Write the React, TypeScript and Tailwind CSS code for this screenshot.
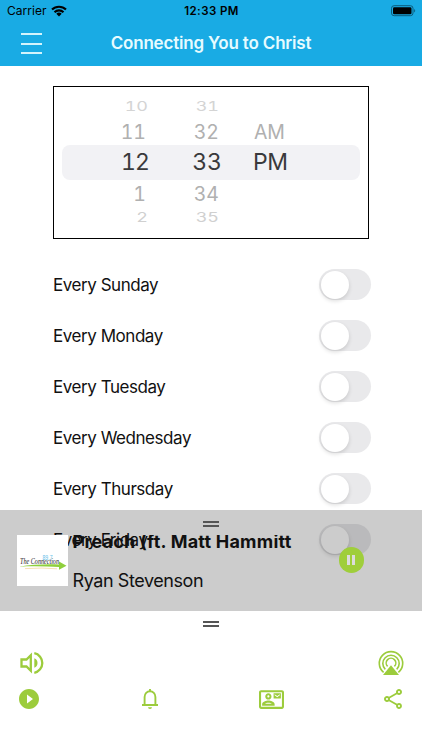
import { MdOutlineContactMail, MdOutlineShare, MdPlayCircleFilled } from "react-icons/md";

const days = ["Sunday", "Monday", "Tuesday", "Wednesday", "Thursday", "Friday"];

function StatusBar() {
  return (
    <div className="flex h-[22px] items-center justify-between pr-1.5 pl-[7px] text-black">
      <div className="flex w-24 items-center gap-1 text-[12px] tracking-[0.05px]">
        Carrier
        <svg width="16" height="12" viewBox="0 0 16 12">
          <path
            d="M1 4.6a10 10 0 0 1 14 0M3.5 7.2a6.4 6.4 0 0 1 9 0"
            fill="none"
            stroke="#000"
            strokeWidth="2.1"
          />
          <path d="M8 11.5 5.3 8.8a3.9 3.9 0 0 1 5.4 0z" />
        </svg>
      </div>
      <span className="pt-0.5 text-[11.5px] font-semibold tracking-[0.4px]">12:33 PM</span>
      <div className="flex w-24 justify-end">
        <svg width="25" height="12" viewBox="0 0 25 12">
          <rect x="0.5" y="0.7" width="21.5" height="10" rx="2.6" fill="none" stroke="#0b5c7c" />
          <rect x="2" y="2.2" width="18.5" height="7" rx="1.3" />
          <path d="M23.2 4v3.6c1.3-.6 1.3-3 0-3.6z" fill="#0b5c7c" />
        </svg>
      </div>
    </div>
  );
}

function Header() {
  return (
    <header className="h-[66px] bg-[#19abe4]">
      <StatusBar />
      <div className="flex h-[43px] items-center justify-between px-[21px]">
        <button className="flex h-[21px] w-[21px] flex-col justify-between">
          <span className="h-0.5 w-full bg-[#d3f4fc]" />
          <span className="h-0.5 w-full bg-[#d3f4fc]" />
          <span className="h-0.5 w-full bg-[#d3f4fc]" />
        </button>
        <h1 className="text-[17px] font-semibold tracking-[-0.18px] text-[#e6fbff]">
          Connecting You to Christ
        </h1>
        <span className="w-[21px]" />
      </div>
    </header>
  );
}

function TimePicker() {
  return (
    <div className="mt-5 ml-[53px] flex h-[153px] w-[316px] flex-col items-center border border-black pt-[11px] text-[19.5px] text-[#b0b0b0] tabular-nums">
      <div className="grid h-[18px] w-[298px] grid-cols-[86px_71px_141px] items-center text-right text-[18px] leading-[14px] text-[#d4d4d4]">
        <span className="scale-y-[.72]">10</span>
        <span className="scale-y-[.72]">31</span>
      </div>
      <div className="grid h-[29px] w-[298px] grid-cols-[84px_73px_141px] items-center pt-[2px] text-right leading-[26px]">
        <span>11</span>
        <span>32</span>
        <span className="pl-[35px] text-left tracking-[-0.2px]">AM</span>
      </div>
      <div className="grid h-[35px] w-[298px] shrink-0 grid-cols-[87px_73px_138px] items-center rounded-lg bg-[#f2f2f5] text-right text-[23px] text-[#3a3a3c]">
        <span className="tracking-[-0.9px]">12</span>
        <span>33</span>
        <span className="pl-[31px] text-left tracking-[-0.5px]">PM</span>
      </div>
      <div className="grid h-[27px] w-[298px] grid-cols-[84px_73px_141px] items-center text-right">
        <span>1</span>
        <span>34</span>
      </div>
      <div className="grid h-[21px] w-[298px] grid-cols-[86px_71px_141px] items-center text-right text-[18px] leading-[14px] text-[#d0d0d0]">
        <span className="scale-y-[.72]">2</span>
        <span className="scale-y-[.72]">35</span>
      </div>
    </div>
  );
}

function DayRow({ day }: { day: string }) {
  return (
    <div className="flex h-[51px] items-center justify-between pr-[51px] pl-[53px]">
      <span className="pt-0.5 text-[17px] tracking-[-0.45px] text-[#111]">Every {day}</span>
      <button className="flex h-[31.5px] w-[52px] items-center rounded-full bg-[#e9e9eb] pl-0.5">
        <span className="size-7 rounded-full bg-white shadow-[0_2px_4px_rgba(0,0,0,0.14)]" />
      </button>
    </div>
  );
}

function Handle() {
  return (
    <div className="mx-auto flex w-4 flex-col gap-0.5">
      <span className="h-0.5 bg-[#555]" />
      <span className="h-0.5 bg-[#555]" />
    </div>
  );
}

function Logo() {
  return (
    <svg width="51" height="51" viewBox="0 0 51 51" className="shrink-0 bg-white">
      <path d="M2 31.8C14 29.4 29 29 42 29.4v-3l7.5 4.4-7.5 4V32C29 31.4 15 31 2 31.8z" fill="#8fcf3c" />
      <path d="M8 33.6q18-1.2 32 .2" fill="none" stroke="#f5d9a0" strokeWidth="0.8" />
      <text
        x="25.5"
        y="25"
        fontSize="6.5"
        fill="#62bde8"
        textLength="10"
        lengthAdjust="spacingAndGlyphs"
        fontFamily="Liberation Sans, sans-serif"
      >
        89.7
      </text>
      <text
        x="3"
        y="29.3"
        fontSize="7.5"
        fill="#222"
        fontStyle="italic"
        fontFamily="Liberation Serif, serif"
        textLength="39"
        lengthAdjust="spacingAndGlyphs"
      >
        The Connection
      </text>
    </svg>
  );
}

function NowPlaying() {
  return (
    <div className="h-[101.5px] bg-black/20 pt-[11px]">
      <Handle />
      <div className="flex pt-[8.5px] pl-[16.5px]">
        <Logo />
        <div className="ml-[5px] w-[219px] overflow-hidden whitespace-nowrap text-[#111]">
          <p className="-mt-1.5 text-[18px] leading-[26px] font-bold tracking-[0.22px]">Preach (ft. Matt Hammitt)</p>
          <p className="mt-[13px] text-[18px] leading-[26px] tracking-[-0.43px]">Ryan Stevenson</p>
        </div>
        <button className="mt-3 ml-[47px] flex size-[25.5px] items-center justify-center gap-[2px] rounded-full bg-[#9fce3b]">
          <span className="h-[10px] w-[3px] bg-[#dcdcdc]" />
          <span className="h-[10px] w-[3px] bg-[#dcdcdc]" />
        </button>
      </div>
    </div>
  );
}

function VolumeIcon() {
  return (
    <svg width="26" height="24" viewBox="0 0 26 24" fill="none" stroke="#9ccc3c" strokeWidth="2.3">
      <path d="M2.5 8.5h5l4.3-4.2v15.4l-4.3-4.2h-5z" />
      <path d="M15.3 7.2a5.2 5.2 0 0 1 0 9.6z" fill="#9ccc3c" stroke="none" />
      <path d="M15.3 2.2a10 10 0 0 1 0 19.6" />
    </svg>
  );
}

function AirPlayIcon() {
  return (
    <svg width="26" height="26" viewBox="0 0 26 26" fill="none" stroke="#9ccc3c" strokeWidth="1.6">
      <path d="M5.6 22.4a11.7 11.7 0 1 1 14.8 0" />
      <path d="M7.3 19.4a8.2 8.2 0 1 1 11.4 0" />
      <path d="M9.6 16.4a4.8 4.8 0 1 1 6.8 0" />
      <path d="M13 15.3 21 24.9H5z" fill="#9ccc3c" stroke="none" />
    </svg>
  );
}

function BellIcon() {
  return (
    <svg width="24" height="22" viewBox="-3 0 24 22" fill="none" stroke="#9ccc3c" strokeWidth="1.9">
      <path d="M3.6 16.5V9a5.4 5.8 0 0 1 10.8 0v7.5" />
      <path d="M1 17h16M9 1v3" />
      <path d="M7 19.2h4a2 1.8 0 0 1-4 0z" fill="#9ccc3c" stroke="none" />
    </svg>
  );
}

function Toolbar() {
  return (
    <div className="h-[139px] bg-white pt-[9.5px] text-[#9ccc3c]">
      <Handle />
      <div className="flex items-center justify-between pt-[23px] pr-[18px] pl-[19px]">
        <VolumeIcon />
        <AirPlayIcon />
      </div>
      <div className="flex items-center justify-between pt-[11px] pr-[17px] pl-[17px]">
        <MdPlayCircleFilled size={24} />
        <BellIcon />
        <MdOutlineContactMail size={25} />
        <MdOutlineShare size={24} />
      </div>
    </div>
  );
}

export default function App() {
  return (
    <main className="relative h-[750px] w-[422px] overflow-hidden bg-white font-[Inter,sans-serif]">
      <Header />
      <TimePicker />
      <div className="mt-5">
        {days.map((day) => (
          <DayRow key={day} day={day} />
        ))}
      </div>
      <div className="absolute inset-x-0 bottom-0">
        <NowPlaying />
        <Toolbar />
      </div>
    </main>
  );
}
